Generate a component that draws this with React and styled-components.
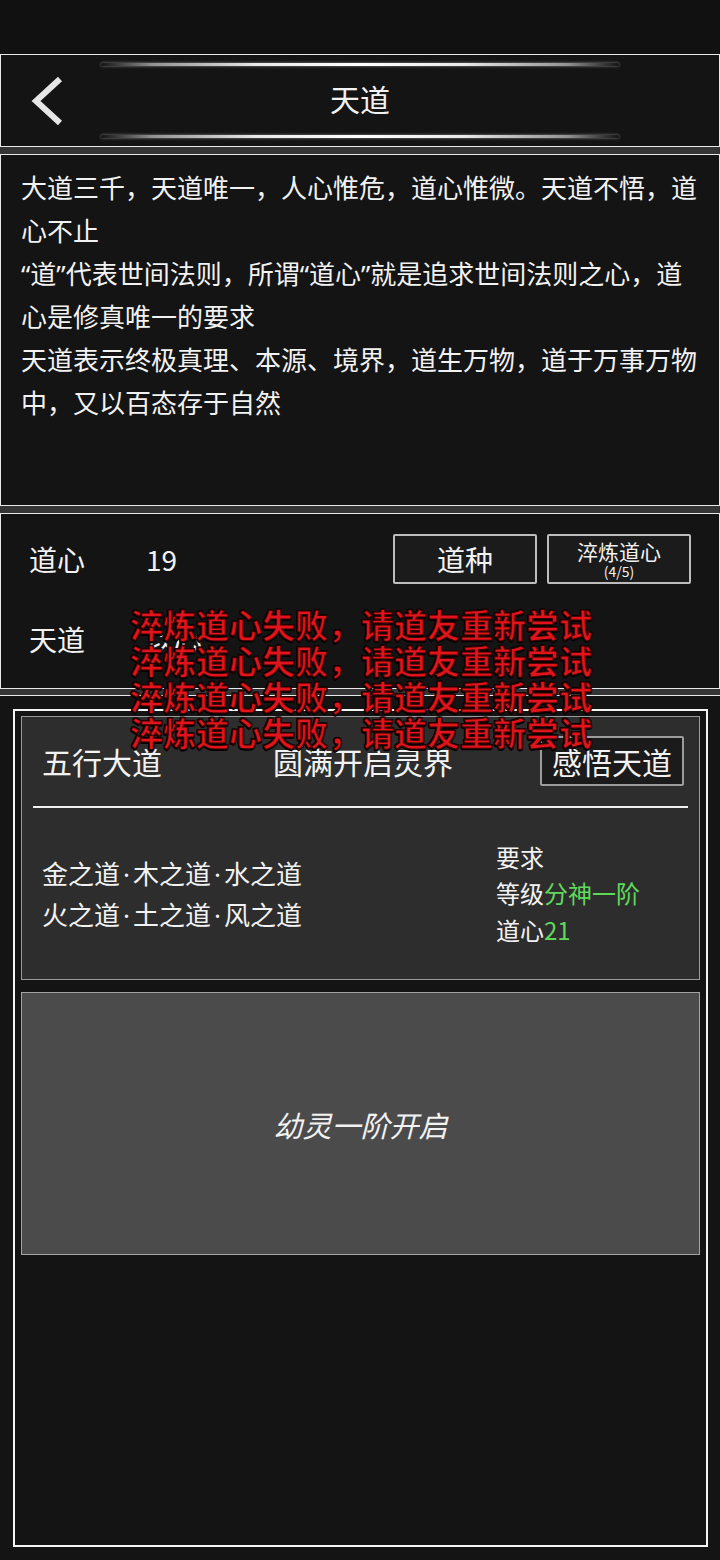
import React from 'react';
import styled, { createGlobalStyle } from 'styled-components';

const GlobalStyle = createGlobalStyle`
  html, body {
    margin: 0;
    padding: 0;
    background: #131313;
  }
  body {
    font-family: "Noto Sans CJK SC", "Noto Sans", sans-serif;
    color: #f2f2f2;
  }
  * {
    box-sizing: border-box;
  }
`;

const Page = styled.div`
  position: relative;
  width: 720px;
  min-height: 1560px;
  display: flex;
  flex-direction: column;
  background: #131313;
`;

const StatusBar = styled.div`
  height: 54px;
  background: #111111;
`;

const Strip = styled.div`
  height: ${(p) => p.h || 7}px;
  background: #353535;
`;

const Section = styled.section`
  border: 1px solid #e9e9e9;
  background: #141414;
  height: ${(p) => p.h}px;
`;

const Header = styled(Section)`
  display: grid;
  grid-template-columns: 100px 1fr 100px;
`;

const BackButton = styled.button`
  display: flex;
  align-items: center;
  padding: 0 0 0 28px;
  background: none;
  border: none;
  cursor: pointer;
`;

const TitleColumn = styled.div`
  display: flex;
  flex-direction: column;
  justify-content: space-between;
  align-items: stretch;
  padding: 8px 0 8px;
`;

const GlowLine = styled.div`
  height: 3px;
  border-radius: 2px;
  background: linear-gradient(
    90deg,
    rgba(255, 255, 255, 0) 0%,
    rgba(200, 200, 200, 0.7) 10%,
    #e8e8e8 30%,
    #ffffff 50%,
    #e8e8e8 70%,
    rgba(200, 200, 200, 0.7) 90%,
    rgba(255, 255, 255, 0) 100%
  );
  box-shadow: 0 0 3px rgba(255, 255, 255, 0.5);
`;

const Title = styled.h1`
  margin: 0 0 6px;
  font-size: 30px;
  font-weight: 400;
  text-align: center;
  line-height: 40px;
`;

const Description = styled(Section)`
  padding: 12px 20px 0;
  font-family: "Noto Sans", "Noto Sans CJK SC", sans-serif;
  font-size: 26px;
  line-height: 43px;
  p {
    margin: 0;
  }
`;

const Stats = styled(Section)`
  display: flex;
  flex-direction: column;
  gap: 30px;
  padding: 20px 28px 0 28px;
`;

const StatRow = styled.div`
  display: flex;
  align-items: center;
  height: 50px;
`;

const StatLabel = styled.span`
  width: 117px;
  font-size: 28px;
`;

const StatValue = styled.span`
  flex: 1;
  font-size: 28px;
`;

const ActionButton = styled.button`
  width: 144px;
  height: 50px;
  margin-left: 10px;
  background: #1b1b1b;
  border: 2px solid #bdbdbd;
  border-radius: 2px;
  color: #f2f2f2;
  font-family: inherit;
  font-size: ${(p) => (p.small ? 21 : 28)}px;
  line-height: ${(p) => (p.small ? 24 : 44)}px;
  display: flex;
  flex-direction: column;
  align-items: center;
  justify-content: center;
  padding: 0;
  small {
    font-size: 14px;
    line-height: 16px;
  }
`;

const Toast = styled.div`
  position: absolute;
  left: 130px;
  top: 606px;
  font-size: 33px;
  font-weight: 700;
  line-height: 36px;
  color: #e0141a;
  pointer-events: none;
  -webkit-text-stroke: 1px #3a0000;
  text-shadow: 1px 1px 0 #000, -1px -1px 0 #000, 1px -1px 0 #000, -1px 1px 0 #000,
    0 2px 0 #000;
  white-space: nowrap;
`;

const RealmSection = styled.section`
  flex: 1;
  border-top: 1px solid #e9e9e9;
  padding: 13px 12px 12px 13px;
  background: #141414;
`;

const Frame = styled.div`
  height: 838px;
  border: 2px solid #f4f4f4;
  padding: 5px 6px;
  display: flex;
  flex-direction: column;
  gap: 12px;
`;

const RealmCard = styled.div`
  height: 264px;
  background: #2d2d2d;
  border: 1px solid #9a9a9a;
  display: flex;
  flex-direction: column;
`;

const CardHeader = styled.div`
  display: grid;
  grid-template-columns: 1fr auto 1fr;
  align-items: center;
  padding: 19px 15px 0 20px;
  font-size: 30px;
`;

const CardTitle = styled.span`
  line-height: 50px;
`;

const InsightButton = styled.button`
  justify-self: end;
  width: 144px;
  height: 50px;
  background: #1b1b1b;
  border: 2px solid #9c9c9c;
  border-radius: 2px;
  color: #f2f2f2;
  font-family: inherit;
  font-size: 30px;
  line-height: 44px;
  padding: 0;
`;

const Divider = styled.div`
  height: 2px;
  margin: 20px 11px 0;
  background: #f0f0f0;
`;

const CardBody = styled.div`
  flex: 1;
  display: grid;
  grid-template-columns: 1fr 203px;
  align-items: center;
  padding-left: 20px;
`;

const PathList = styled.div`
  font-size: 26px;
  line-height: 39px;
`;

const Dot = styled.span`
  display: inline-block;
  width: 13px;
  text-align: center;
  font-family: "Noto Sans", sans-serif;
`;

const Requirements = styled.div`
  font-size: 24px;
  line-height: 36.5px;
`;

const Green = styled.span`
  color: #5fd85a;
`;

const LockedCard = styled.div`
  height: 263px;
  background: #4b4b4b;
  border: 1px solid #a3a3a3;
  display: flex;
  align-items: center;
  justify-content: center;
  font-size: 29px;
  font-style: italic;
`;

const BackIcon = () => (
  <svg width="36" height="50" viewBox="0 0 36 50">
    <polyline
      points="31,3 7,25 31,47"
      fill="none"
      stroke="#e6e6e6"
      strokeWidth="6"
      strokeLinecap="butt"
      strokeLinejoin="miter"
    />
  </svg>
);

const PathLine = ({ items }) => (
  <div>
    {items.map((item, i) => (
      <React.Fragment key={item}>
        {i > 0 && <Dot>·</Dot>}
        {item}
      </React.Fragment>
    ))}
  </div>
);

const toastText = '淬炼道心失败，请道友重新尝试';

const App = () => {
  return (
    <Page>
      <GlobalStyle />
      <StatusBar />
      <Header h={93}>
        <BackButton aria-label="back">
          <BackIcon />
        </BackButton>
        <TitleColumn>
          <GlowLine />
          <Title>天道</Title>
          <GlowLine />
        </TitleColumn>
        <div />
      </Header>
      <Strip />
      <Description h={352}>
        <p>大道三千，天道唯一，人心惟危，道心惟微。天道不悟，道心不止</p>
        <p>“道”代表世间法则，所谓“道心”就是追求世间法则之心，道心是修真唯一的要求</p>
        <p>天道表示终极真理、本源、境界，道生万物，道于万事万物中，又以百态存于自然</p>
      </Description>
      <Strip />
      <Stats h={176}>
        <StatRow>
          <StatLabel>道心</StatLabel>
          <StatValue>19</StatValue>
          <ActionButton>道种</ActionButton>
          <ActionButton small>
            淬炼道心
            <small>(4/5)</small>
          </ActionButton>
        </StatRow>
        <StatRow>
          <StatLabel>天道</StatLabel>
          <StatValue>以心</StatValue>
        </StatRow>
      </Stats>
      <Strip h={6} />
      <RealmSection>
        <Frame>
          <RealmCard>
            <CardHeader>
              <CardTitle>五行大道</CardTitle>
              <CardTitle>圆满开启灵界</CardTitle>
              <InsightButton>感悟天道</InsightButton>
            </CardHeader>
            <Divider />
            <CardBody>
              <PathList>
                <PathLine items={['金之道', '木之道', '水之道']} />
                <PathLine items={['火之道', '土之道', '风之道']} />
              </PathList>
              <Requirements>
                <div>要求</div>
                <div>
                  等级<Green>分神一阶</Green>
                </div>
                <div>
                  道心<Green>21</Green>
                </div>
              </Requirements>
            </CardBody>
          </RealmCard>
          <LockedCard>幼灵一阶开启</LockedCard>
        </Frame>
      </RealmSection>
      <Toast>
        <div>{toastText}</div>
        <div>{toastText}</div>
        <div>{toastText}</div>
        <div>{toastText}</div>
      </Toast>
    </Page>
  );
};

export default App;
